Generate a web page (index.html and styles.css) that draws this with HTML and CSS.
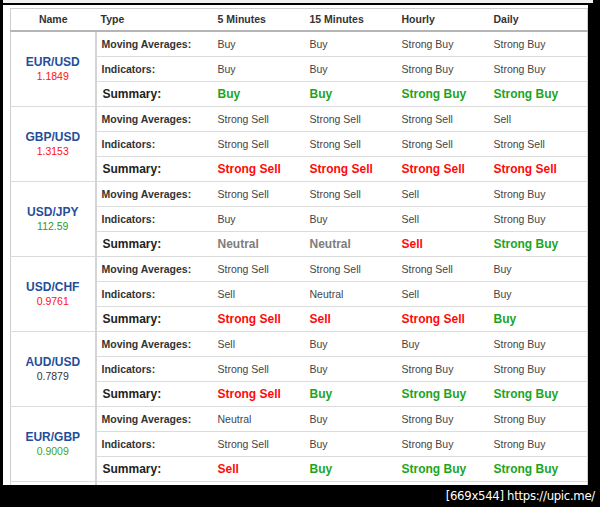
FILE: index.html
```html
<!DOCTYPE html>
<html>
<head>
<meta charset="utf-8">
<link rel="stylesheet" href="styles.css">
</head>
<body>
<div class="shot">
  <div class="top-strip"></div>
  <div class="panel">
    <table class="tech">
      <colgroup>
        <col class="c-name"><col class="c-type"><col class="c-per"><col class="c-per"><col class="c-per"><col class="c-last">
      </colgroup>
      <thead>
        <tr><th class="name-h">Name</th><th>Type</th><th>5 Minutes</th><th>15 Minutes</th><th>Hourly</th><th>Daily</th></tr>
      </thead>
      <tbody>
        <tr><td class="pair" rowspan="3"><div class="sym">EUR/USD</div><div class="px down">1.1849</div></td><td class="lbl">Moving Averages:</td><td>Buy</td><td>Buy</td><td>Strong Buy</td><td>Strong Buy</td></tr>
        <tr><td class="lbl">Indicators:</td><td>Buy</td><td>Buy</td><td>Strong Buy</td><td>Strong Buy</td></tr>
        <tr class="sum"><td class="lbl">Summary:</td><td class="buy">Buy</td><td class="buy">Buy</td><td class="buy">Strong Buy</td><td class="buy">Strong Buy</td></tr>

        <tr><td class="pair" rowspan="3"><div class="sym">GBP/USD</div><div class="px down">1.3153</div></td><td class="lbl">Moving Averages:</td><td>Strong Sell</td><td>Strong Sell</td><td>Strong Sell</td><td>Sell</td></tr>
        <tr><td class="lbl">Indicators:</td><td>Strong Sell</td><td>Strong Sell</td><td>Strong Sell</td><td>Strong Sell</td></tr>
        <tr class="sum"><td class="lbl">Summary:</td><td class="sell">Strong Sell</td><td class="sell">Strong Sell</td><td class="sell">Strong Sell</td><td class="sell">Strong Sell</td></tr>

        <tr><td class="pair" rowspan="3"><div class="sym">USD/JPY</div><div class="px up">112.59</div></td><td class="lbl">Moving Averages:</td><td>Strong Sell</td><td>Strong Sell</td><td>Sell</td><td>Strong Buy</td></tr>
        <tr><td class="lbl">Indicators:</td><td>Buy</td><td>Buy</td><td>Sell</td><td>Strong Buy</td></tr>
        <tr class="sum"><td class="lbl">Summary:</td><td class="neu">Neutral</td><td class="neu">Neutral</td><td class="sell">Sell</td><td class="buy">Strong Buy</td></tr>

        <tr><td class="pair" rowspan="3"><div class="sym">USD/CHF</div><div class="px down">0.9761</div></td><td class="lbl">Moving Averages:</td><td>Strong Sell</td><td>Strong Sell</td><td>Strong Sell</td><td>Buy</td></tr>
        <tr><td class="lbl">Indicators:</td><td>Sell</td><td>Neutral</td><td>Sell</td><td>Buy</td></tr>
        <tr class="sum"><td class="lbl">Summary:</td><td class="sell">Strong Sell</td><td class="sell">Sell</td><td class="sell">Strong Sell</td><td class="buy">Buy</td></tr>

        <tr><td class="pair" rowspan="3"><div class="sym">AUD/USD</div><div class="px flat">0.7879</div></td><td class="lbl">Moving Averages:</td><td>Sell</td><td>Buy</td><td>Buy</td><td>Strong Buy</td></tr>
        <tr><td class="lbl">Indicators:</td><td>Strong Sell</td><td>Buy</td><td>Strong Buy</td><td>Strong Buy</td></tr>
        <tr class="sum"><td class="lbl">Summary:</td><td class="sell">Strong Sell</td><td class="buy">Buy</td><td class="buy">Strong Buy</td><td class="buy">Strong Buy</td></tr>

        <tr><td class="pair" rowspan="3"><div class="sym">EUR/GBP</div><div class="px up2">0.9009</div></td><td class="lbl">Moving Averages:</td><td>Neutral</td><td>Buy</td><td>Strong Buy</td><td>Strong Buy</td></tr>
        <tr><td class="lbl">Indicators:</td><td>Strong Sell</td><td>Buy</td><td>Strong Buy</td><td>Strong Buy</td></tr>
        <tr class="sum"><td class="lbl">Summary:</td><td class="sell">Sell</td><td class="buy">Buy</td><td class="buy">Strong Buy</td><td class="buy">Strong Buy</td></tr>

        <tr><td class="pair"></td><td></td><td></td><td></td><td></td><td></td></tr>
      </tbody>
    </table>
  </div>
  <div class="footer">[669x544] https://upic.me/</div>
</div>
</body>
</html>
```

FILE: styles.css
```css
html, body {
  margin: 0;
  padding: 0;
  background: #000;
}
.shot {
  width: 600px;
  height: 507px;
  overflow: hidden;
  display: flex;
  flex-direction: column;
  background: #000;
}
.top-strip {
  height: 3px;
  margin-left: 3px;
  margin-right: 7px;
  background: #f1f1f1;
  flex: none;
}
.panel {
  flex: none;
  margin: 2px 12px 0 3px;
  height: 480px;
  background: #fff;
  overflow: hidden;
  padding: 3px 0 0 7px;
  box-sizing: border-box;
}
.tech {
  border-collapse: collapse;
  table-layout: fixed;
  width: 577px;
  font-family: "Liberation Sans", Arial, sans-serif;
  font-size: 10.5px;
  color: #333;
  border: 1px solid #cfcfcf;
}
.c-name { width: 85px; }
.c-type { width: 117px; }
.c-per { width: 92px; }
.c-last { width: 99px; }
.tech th {
  height: 20px;
  padding: 0 5px 1px;
  text-align: left;
  font-weight: bold;
  color: #333;
  border-bottom: 2px solid #b5b5b5;
}
.tech th.name-h { text-align: center; }
.tech td {
  height: 25px;
  padding: 0 5px;
  white-space: nowrap;
  border-bottom: 1px solid #dcdcdc;
  color: #444;
  box-sizing: border-box;
}
.tech td.pair {
  text-align: center;
  border-right: 2px solid #d4d4d4;
  padding: 0;
}
.sym {
  font-size: 12px;
  font-weight: bold;
  color: #1f4e9b;
  line-height: 14px;
}
.px {
  font-size: 10.5px;
  line-height: 14px;
}
.px.down { color: #ff1010; }
.px.up { color: #2a9a2a; }
.px.up2 { color: #45a512; }
.px.flat { color: #333; }
.tech td.lbl {
  font-weight: bold;
  color: #333;
}
.sum td { font-size: 12px; font-weight: bold; }
.sum td.lbl { padding-left: 6px; color: #222; }
.tech td.buy { color: #1ca51c; }
.tech td.sell { color: #ff0a0a; }
.tech td.neu { color: #7d7d7d; }
.footer {
  flex: none;
  height: 22px;
  color: #fff;
  text-align: right;
  padding-right: 5px;
  font-family: "DejaVu Sans Condensed", "DejaVu Sans", sans-serif;
  font-size: 13px;
  line-height: 22px;
  letter-spacing: -0.3px;
}
```
